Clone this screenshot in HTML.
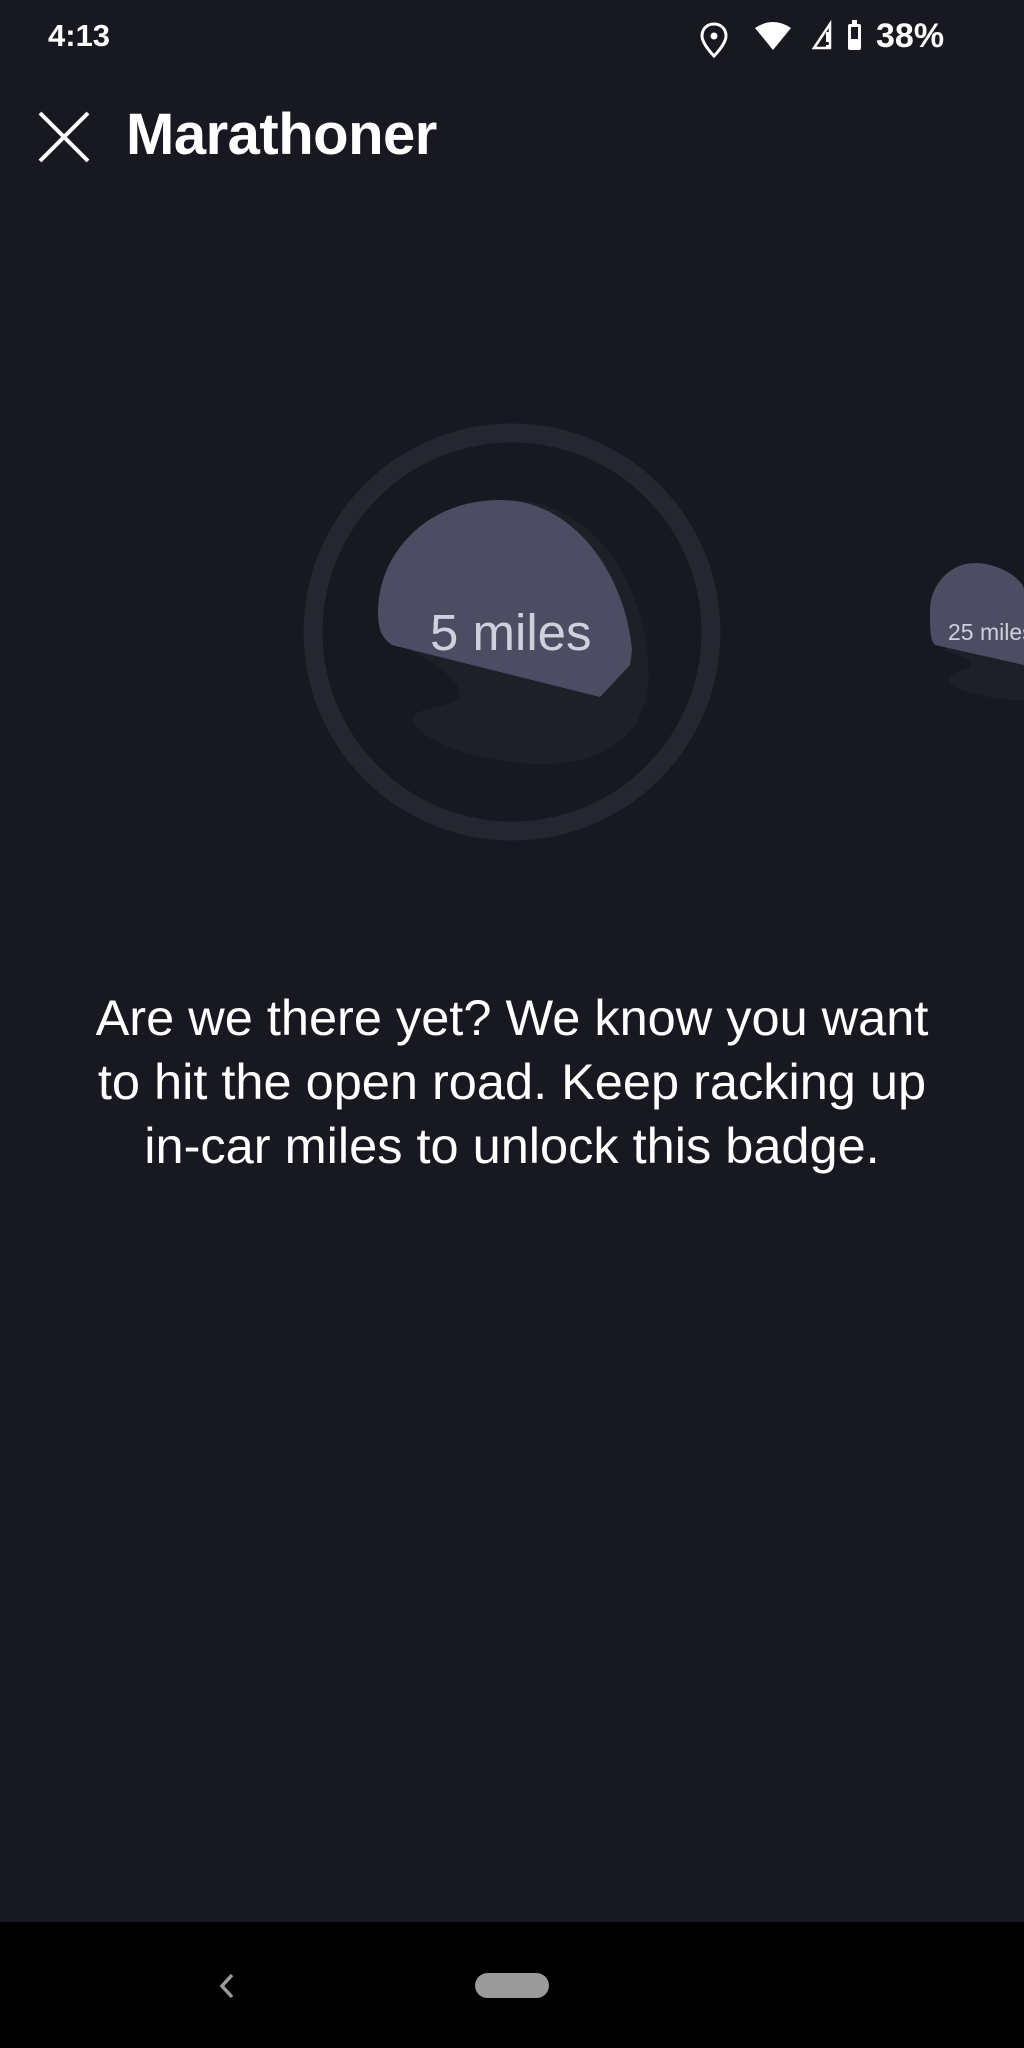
<!DOCTYPE html>
<html><head><meta charset="utf-8"><style>
html,body{margin:0;padding:0}
body{width:1024px;height:2048px;background:#181820;position:relative;overflow:hidden;font-family:"Liberation Sans",sans-serif;color:#fff}
.abs{position:absolute}
</style></head><body>
<svg class="abs" style="left:0;top:0" width="1024" height="2048" viewBox="0 0 1024 2048">
  <circle cx="512" cy="632" r="199" fill="none" stroke="#262631" stroke-width="19"/>
  <path d="M392 640 C385 570 430 505 505 500 C575 497 640 560 648 660 C655 730 610 765 540 764 C470 763 410 735 413 718 C420 705 445 710 458 698 C468 680 420 655 392 640 Z" fill="#1f1f28"/>
  <path d="M378 612 C378 555 425 500 500 500 C575 500 625 575 632 650 L630 665 L600 697 L392 645 C382 638 378 630 378 612 Z" fill="#4c4c62"/>
  <path d="M960 563 C990 563 1024 590 1024 600 L1024 700 C990 700 950 690 948 680 C950 670 968 672 970 665 C972 655 950 655 945 650 Z" fill="#1f1f28"/>
  <path d="M930 610 C930 585 950 563 975 563 C1000 563 1024 580 1024 590 L1024 665 L935 645 C930 640 930 630 930 610 Z" fill="#4c4c62"/>
  <path d="M40 113 L88 161 M88 113 L40 161" stroke="#fff" stroke-width="4" fill="none"/>
  <path d="M714 24 c-7 0 -12 5 -12 12 c0 8 12 20 12 20 c0 0 12 -12 12 -20 c0 -7 -5 -12 -12 -12 z" fill="none" stroke="#fff" stroke-width="3"/>
  <circle cx="714" cy="36" r="3.5" fill="#fff"/>
  <path d="M755 28 Q773 16 791 28 L773 50 Z" fill="#fff"/>
  <path d="M814 48 L830 24 L830 48 Z" fill="none" stroke="#fff" stroke-width="2.5"/>
  <rect x="826" y="32" width="3" height="10" fill="#fff"/><rect x="826" y="45" width="3" height="3" fill="#fff"/>
  <rect x="848" y="24" width="13" height="26" rx="2" fill="#fff"/><rect x="852" y="20" width="5" height="4" fill="#fff"/>
  <rect x="851" y="27" width="7" height="12" fill="#181820"/>
  <rect x="0" y="1922" width="1024" height="126" fill="#000"/>
  <rect x="475" y="1973" width="74" height="25" rx="12.5" fill="#9a9a9a"/>
  <path d="M232 1975 L222 1986 L232 1997" stroke="#9a9a9a" stroke-width="3.5" fill="none"/>
</svg>
<div class="abs" style="left:48px;top:18px;font-size:31px;font-weight:bold">4:13</div>
<div class="abs" style="left:876px;top:17px;font-size:34px;font-weight:bold">38%</div>
<div class="abs" style="left:126px;top:101px;font-size:58px;font-weight:bold;letter-spacing:-0.5px">Marathoner</div>
<div class="abs" style="left:430px;top:603px;font-size:51px;color:#d0d0dc">5 miles</div>
<div class="abs" style="left:948px;top:619px;font-size:23px;color:#d0d0dc;white-space:nowrap">25 miles</div>
<div class="abs" style="left:0;width:1024px;top:986px;text-align:center;font-size:50.5px;line-height:64px;white-space:nowrap">Are we there yet? We know you want<br>to hit the open road. Keep racking up<br>in-car miles to unlock this badge.</div>
</body></html>
